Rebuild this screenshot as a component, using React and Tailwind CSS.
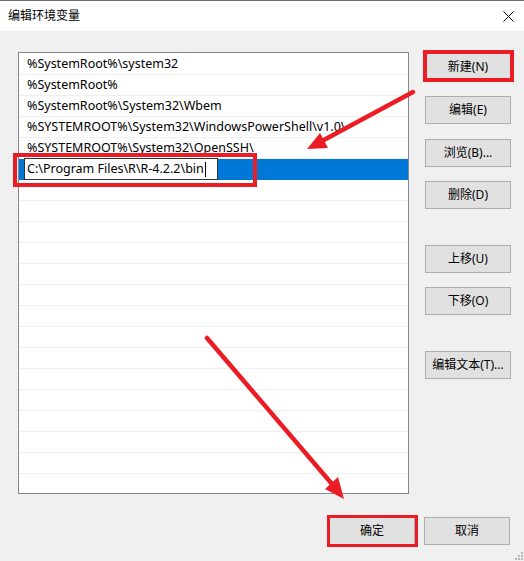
import React from "react";

const rows = [
  "%SystemRoot%\\system32",
  "%SystemRoot%",
  "%SystemRoot%\\System32\\Wbem",
  "%SYSTEMROOT%\\System32\\WindowsPowerShell\\v1.0\\",
  "%SYSTEMROOT%\\System32\\OpenSSH\\",
];

const font = { fontFamily: '"Noto Sans", "Noto Sans CJK SC", sans-serif' };

function Btn({ children, className = "" }) {
  return (
    <div
      className={`w-[86px] h-[28px] shrink-0 flex items-center justify-center bg-[#e1e1e1] border border-[#adadad] text-[12px] text-black leading-none ${className}`}
    >
      {children}
    </div>
  );
}

export default function App() {
  const empty = Array.from({ length: 16 });
  return (
    <div
      className="relative w-[524px] h-[561px] bg-[#f0f0f0] border-t border-[#6e6e6e] overflow-hidden flex flex-col"
      style={font}
    >
      {/* title bar */}
      <div className="h-[30px] shrink-0 bg-white flex items-center justify-between pl-2 pr-[10px]">
        <span className="text-[12px] text-black leading-none">编辑环境变量</span>
        <svg width="11" height="11" viewBox="0 0 11 11" className="mt-px">
          <path d="M0.5 0.5 L10.5 10.5 M10.5 0.5 L0.5 10.5" stroke="#000" strokeWidth="1" />
        </svg>
      </div>

      {/* body */}
      <div className="flex pl-[18px] mt-[21px]">
        <div className="w-[391px] h-[442px] border border-[#828790] bg-white overflow-hidden pt-px">
          {rows.map((r) => (
            <div
              key={r}
              className="h-[21px] border-b border-[#efefef] flex items-center pl-2 text-[12.5px] text-black leading-none whitespace-nowrap"
            >
              {r}
            </div>
          ))}
          <div className="h-[21px] border-b border-[#0078d7] bg-[#0078d7] flex items-start">
            <div className="ml-[5px] -mt-px w-[194px] h-[22px] border border-[#333] bg-white flex items-center pl-[2px] text-[12.5px] text-black leading-none whitespace-nowrap">
              <span>C:\Program Files\R\R-4.2.2\bin</span>
              <span className="w-px h-[15px] bg-black ml-px" />
            </div>
          </div>
          {empty.map((_, i) => (
            <div key={i} className="h-[21px] border-b border-[#efefef]" />
          ))}
        </div>

        <div className="ml-[16px] flex flex-col pt-px">
          <Btn>新建(N)</Btn>
          <Btn className="mt-[15px]">编辑(E)</Btn>
          <Btn className="mt-[15px]">浏览(B)...</Btn>
          <Btn className="mt-[14px]">删除(D)</Btn>
          <Btn className="mt-[36px]">上移(U)</Btn>
          <Btn className="mt-[14px]">下移(O)</Btn>
          <Btn className="mt-[36px]">编辑文本(T)...</Btn>
        </div>
      </div>

      {/* bottom buttons */}
      <div className="flex justify-end gap-[9px] pr-[14px] mt-[23px]">
        <Btn className="border-[#0078d7]">确定</Btn>
        <Btn>取消</Btn>
      </div>

      {/* annotation boxes */}
      <div className="absolute left-[423px] top-[49px] w-[91px] h-[32px] border-[4px] border-[#ec1c24]" />
      <div className="absolute left-[13px] top-[152px] w-[244px] h-[34px] border-[4px] border-[#ec1c24]" />
      <div className="absolute left-[327px] top-[514px] w-[91px] h-[32px] border-[3px] border-[#ec1c24]" />

      {/* arrows */}
      <svg
        className="absolute left-0 top-[-1px] pointer-events-none"
        width="524"
        height="561"
        viewBox="0 0 524 561"
      >
        <line x1="413" y1="92" x2="322" y2="141" stroke="#ec1c24" strokeWidth="4.5" strokeLinecap="round" />
        <polygon points="307,149 320,133 328,148" fill="#ec1c24" />
        <line x1="207" y1="338" x2="332" y2="484" stroke="#ec1c24" strokeWidth="4.5" strokeLinecap="round" />
        <polygon points="344,499 325,489 338,477" fill="#ec1c24" />
      </svg>

      {/* resize grip */}
      <svg className="absolute right-[1px] bottom-[1px]" width="10" height="10" viewBox="0 0 10 10">
        <rect x="8" y="2" width="2" height="2" fill="#b8b8b8" />
        <rect x="5" y="5" width="2" height="2" fill="#b8b8b8" />
        <rect x="8" y="5" width="2" height="2" fill="#b8b8b8" />
        <rect x="2" y="8" width="2" height="2" fill="#b8b8b8" />
        <rect x="5" y="8" width="2" height="2" fill="#b8b8b8" />
        <rect x="8" y="8" width="2" height="2" fill="#b8b8b8" />
      </svg>
    </div>
  );
}
